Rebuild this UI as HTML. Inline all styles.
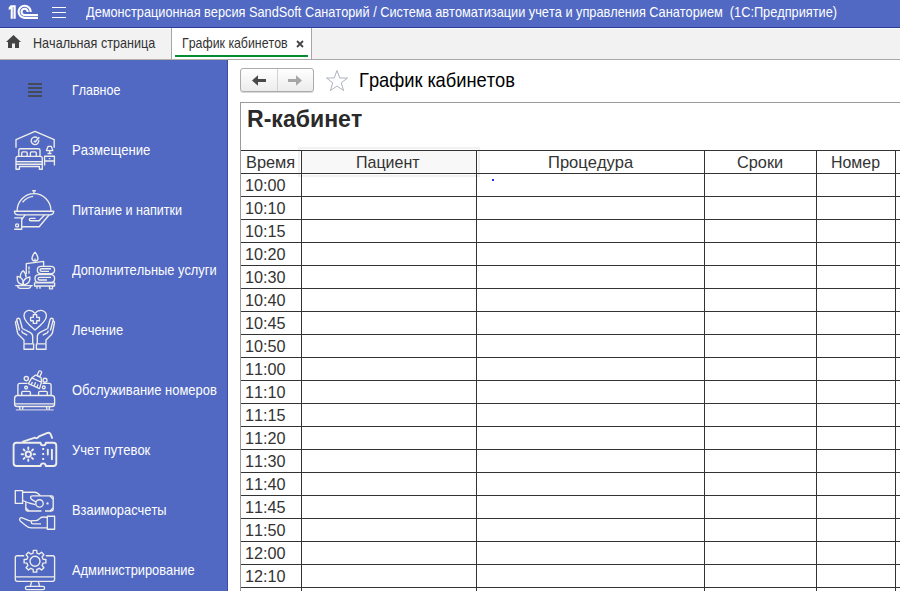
<!DOCTYPE html>
<html lang="ru">
<head>
<meta charset="utf-8">
<title>График кабинетов</title>
<style>
*{box-sizing:border-box;margin:0;padding:0}
html,body{width:900px;height:591px;overflow:hidden;background:#fff;font-family:"Liberation Sans",Arial,sans-serif;color:#222}
.abs{position:absolute}
.tx{font-kerning:none;height:20px;line-height:20px;white-space:pre;transform-origin:0 50%}
#top{left:0;top:0;width:900px;height:28px;background:#5169c3;border-bottom:1px solid #2b3c98}
#tabs{left:0;top:28px;width:900px;height:32px;background:linear-gradient(#fbfbfb 0,#fbfbfb 1px,#f2f2f2 1px);border-bottom:1px solid #a8a8a8}
#tabs .tan{left:0;top:31px;width:228px;height:1px;background:#b5b0a4}
#tab2{left:171px;top:0;width:141px;height:31px;background:#fff;border-left:1px solid #a6a6a6;border-right:1px solid #a6a6a6}
#tab2 .ul{left:3px;top:27px;width:133px;height:2px;background:#068a32}
#side{left:0;top:60px;width:228px;height:531px;background:#5169c3;border-right:1px solid #3a4ea2}
#main{left:228px;top:60px;width:672px;height:531px;background:#fff}
#nav{left:240px;top:68px;width:74px;height:24px;border:1px solid #ababab;border-radius:3px;background:linear-gradient(#fff,#ececec);box-shadow:0 1px 0 #d8d8d8}
#nav .dv{left:36px;top:0;width:1px;height:22px;background:#d2d2d2}
#sheet{left:240px;top:102px;width:660px;height:489px;border-left:1px solid #9b9b9b;border-top:1px solid #9b9b9b;background:#fff}
.hl{left:241px;width:659px;height:1px;background:#333}
.vl{top:150px;width:1px;height:441px;background:#333}
#selo{left:298px;top:147px;width:182px;height:30px;border:2px solid #f1f1f1}
#sel{left:301px;top:150px;width:175px;height:24px;background:#f8f8f8}
</style>
</head>
<body>
<div id="top" class="abs">
<svg class="abs" style="left:0;top:0" width="80" height="27" viewBox="0 0 80 27"><path d="M10.7 5.3 H15.7 V18.8 H10.7 V9 L8.7 10 V7.4 Z" fill="#fff"/><path d="M13.2 7.2 V18.8" stroke="#5169c3" stroke-width="0.7" fill="none"/><g fill="none" stroke="#fff" stroke-width="2.1"><path d="M30.7 11.9 A6.05 6.05 0 1 0 24.6 17.9 H38"/><path d="M27.7 11.9 A3.1 3.1 0 1 0 24.6 15 H38"/></g><path d="M52 7.5H66M52 12.5H66M52 17.5H66" stroke="#fff" stroke-width="1.15"/></svg>
</div>
<div id="tabs" class="abs">
<svg class="abs" style="left:6px;top:7px" width="15" height="13" viewBox="0 0 15 13"><path d="M7.5 0 L0 7 H2 V13 H6 V8.5 H9 V13 H13 V7 H15 Z" fill="#444"/></svg>
<div id="tab2" class="abs"><div class="abs ul"></div>
<svg class="abs" style="left:124px;top:12px" width="8" height="8" viewBox="0 0 8 8"><path d="M1 1 L7 7 M7 1 L1 7" stroke="#444" stroke-width="1.8"/></svg>
</div>
<div class="abs tan"></div>
</div>
<div id="side" class="abs"></div>
<svg class="abs" style="left:28px;top:83px" width="14" height="14" viewBox="0 0 14 14"><path d="M0 1H14M0 5H14M0 9H14M0 13H14" stroke="#454a58" stroke-width="2"/></svg>
<svg class="abs" style="left:0;top:0" width="228" height="591" viewBox="0 0 228 591"><g fill="none" stroke="#efeee9" stroke-width="1.35" stroke-linejoin="round" stroke-linecap="butt">
<g transform="translate(8,124)"><path d="M8 23.8 V15.6 L27 7.3 L46.2 15.6 V23.8"/>
<path d="M29.4 13.9 A3.8 3.8 0 1 0 30.7 16.2"/>
<path d="M25.9 16.9 L27.2 18 L31.3 13.3" stroke-width="1.5"/>
<path d="M10.8 32.2 V26.2 Q10.8 24.7 12.3 24.7 H30.5 Q32 24.7 32 26.2 V32.2"/>
<path d="M13.7 32.2 V29 Q13.7 27.9 14.8 27.9 H18.1 Q19.2 27.9 19.2 29 V32.2"/>
<path d="M22.4 32.2 V29 Q22.4 27.9 23.5 27.9 H27.2 Q28.3 27.9 28.3 29 V32.2"/>
<path d="M8 40.2 V34.4 Q8 32.4 10 32.4 H32.3 Q34.3 32.4 34.3 34.4 V40.2 Z"/>
<path d="M8 37.7 H34.3"/>
<path d="M8 40.2 V45.2 H11.4 V42.5 H31.4 V45.2 H34.3 V40.2"/>
<path d="M40 22.4 H43.4 L44.8 26.6 H38.5 Z"/>
<path d="M41.7 26.6 V29.5 M39.5 29.5 H43.6"/>
<path d="M36.6 32.2 H46.4 V37 H36.6 Z M36.6 37 V41.6 M46.4 37 V41.6 M40.8 34.6 H42.3"/></g>
<g transform="translate(8,184)"><path d="M24.2 6.7 H27.9 M26 6.7 V9.4"/>
<path d="M9.1 27 A16.95 17.4 0 0 1 43 27"/>
<path d="M14.6 18.3 Q18.5 13 25.1 12.3"/>
<path d="M6.4 27.2 H45.7 Q45.7 30.8 41.5 30.8 H10.6 Q6.4 30.8 6.4 27.2 Z"/>
<path d="M6.2 33.9 H13.7 V45.2 H6.2"/>
<circle cx="9.1" cy="41.4" r="1.5"/>
<path d="M13.7 35.5 L17.2 30.9"/>
<path d="M13.7 42.7 H31.2 L41 31"/>
<path d="M36.5 31 L31 36.7 H22.6 Q21.3 36.7 21.3 35.5 Q21.3 34.3 22.6 34.3 H27.6"/></g>
<g transform="translate(8,244)"><path d="M27 8.2 Q30 12 30 14.2 Q30 17 27 17 Q24 17 24 14.2 Q24 12 27 8.2 Z"/>
<path d="M27 14.5 V17"/>
<path d="M18.3 30 V19.7 L35.6 17.4 V22.2"/>
<path d="M21 22.4 V25.4 M21 26.6 V29.8"/>
<path d="M33 29.7 Q29.3 29.7 29.3 26 Q29.3 22.4 33 22.4 H43 Q46.6 22.4 46.6 26 Q46.6 29.7 43 29.7 Z"/>
<path d="M41 27.4 H33.6 Q32.1 27.4 32.1 26 Q32.1 24.7 33.6 24.7 H43"/>
<path d="M31 38.4 Q27 38.4 27 34.5 Q27 30.6 31 30.6 H43 Q46.6 30.6 46.6 34.5 Q46.6 38.4 43 38.4 Z"/>
<path d="M39 36 H31.6 Q30.100 36 30.100 34.700 Q30.100 33.300 31.6 33.300 H43"/>
<path d="M26.5 38.8 H46.6 V42 H26.5 Z M29 42 V44.8 M32 42 V44.8 M41.5 42 V44.8 H44.5 V42"/>
<path d="M15 26.6 Q18.5 30 18 33.5 M15 26.6 Q11.8 30 12.5 33"/>
<path d="M9.2 32.4 Q13.5 33 14.8 36.5 Q15.6 39 14.6 40.7 Q10.5 40 9.5 36.5 Q9 34.5 9.2 32.4 Z"/>
<path d="M21.8 33 Q17 34 15.6 37 Q14.8 39 15.4 40.7 Q20 40.4 21.4 37 Q22.2 35 21.8 33 Z"/>
<path d="M7.3 41.6 H24.7 M9.6 42 Q10 44.3 12.5 44.3 H20 Q22.5 44.3 22.8 42"/></g>
<g transform="translate(8,304)"><path d="M27 9.3 Q24.5 6.2 21 6.4 Q16 7 16 12 Q16 17 27 26 Q38.4 17 38.4 12 Q38.4 7 33 6.4 Q29.5 6.2 27 9.3 Z"/>
<path d="M25.3 10.6 H28.7 V13.3 H31.4 V16.7 H28.7 V19.4 H25.3 V16.7 H22.6 V13.3 H25.3 Z"/>
<path d="M16 39.6 V36 L10.5 30.5 Q9.6 29.6 9.4 28.2 L7.6 19 Q7.3 17.2 9 16.9 L8.8 15.6 Q8.8 14.2 10.4 14.2 Q11.6 14.2 12 15.6 L14.3 24.5"/>
<path d="M9 16.9 L11.6 26.5"/>
<path d="M14.3 24.5 L22 28.4 Q24.7 29.8 24.7 32.5 V39.6"/>
<path d="M14 26.6 Q13.4 28 14.8 28.8 L19.3 31.2"/>
<path d="M38 39.6 V36 L43.5 30.5 Q44.4 29.6 44.6 28.2 L46.4 19 Q46.7 17.2 45 16.9 L45.2 15.6 Q45.2 14.2 43.6 14.2 Q42.4 14.2 42 15.6 L39.7 24.5"/>
<path d="M45 16.9 L42.4 26.5"/>
<path d="M39.7 24.5 L32 28.4 Q29.3 29.8 29.3 32.5 V39.6"/>
<path d="M40 26.6 Q40.6 28 39.2 28.8 L34.7 31.2"/>
<path d="M16 39.8 H25.6 V45.2 H16 Z M28.4 39.8 H38 V45.2 H28.4 Z"/></g>
<g transform="translate(8,364)"><path d="M9.9 31.5 V21.4 Q9.9 19.4 11.9 19.4 H19.5 M34.5 19.4 H41.1 Q43.1 19.4 43.1 21.4 V31.5"/>
<path d="M13.7 31.3 V28.6 Q13.7 27.4 14.9 27.4 H21.2 Q22.4 27.4 22.4 28.6 V31.3"/>
<path d="M30.6 31.3 V28.6 Q30.6 27.4 31.8 27.4 H38.1 Q39.3 27.4 39.3 28.6 V31.3"/>
<path d="M6.6 40 V34.5 Q6.6 31.5 9.6 31.5 H43.6 Q46.6 31.5 46.6 34.5 V40 Q46.6 42.5 44 42.5 H9.2 Q6.6 42.5 6.6 40 Z"/>
<path d="M6.6 39.8 H46.6"/>
<path d="M11.4 42.5 L12 45.6 M15 42.5 L14.4 45.6 M38.4 42.5 L39 45.6 M41.6 42.5 L41 45.6"/>
<path d="M7.8 45.8 H45.7" stroke-opacity="0.75"/>
<circle cx="18.3" cy="14.6" r="2.1"/><circle cx="37" cy="16.2" r="2"/>
<circle cx="18.1" cy="23.6" r="1.4"/><circle cx="35.8" cy="23.4" r="1.4"/>
<g transform="translate(28.7,15.9) rotate(24) scale(0.95,0.9)">
<path d="M-1.6 -9.6 Q-1.6 -10.8 0 -10.8 Q1.6 -10.8 1.6 -9.6 V-4.4 H-1.6 Z"/>
<path d="M-3.2 -4.4 H3.2 L5.6 0.2 H-5.6 Z"/>
<path d="M-5.6 0.2 L-6.4 7.6 H6.4 L5.6 0.2"/>
<path d="M-3.2 4 V7.4 M0 3 V7.4 M3.2 4 V7.4"/>
</g></g>
<g transform="translate(8,424)"><g stroke-width="1.9">
<path d="M8.5 18.8 H32.6 A2.6 2.6 0 0 0 37.8 18.8 H45.4 Q48.3 18.8 48.3 21.8 V39 Q48.3 42 45.4 42 H37.8 A2.6 2.6 0 0 0 32.600 42 H8.5 Q5.600 42 5.600 39 V21.8 Q5.600 18.800 8.5 18.8 Z"/>
<path d="M14.2 17.9 L27 13.6 Q28.800 15.2 31 12.4 L39.6 8.900 Q41.600 8.3 42.5 10 L44.4 14.6"/>
<circle cx="20.300" cy="30.2" r="2.7"/>
<path d="M20.300 23.5 V25 M20.300 35.4 V36.9 M13.6 30.2 H15.100 M25.5 30.2 H27 M15.6 25.5 L16.700 26.600 M23.900 33.8 L25 34.900 M15.6 34.900 L16.700 33.8 M23.900 26.600 L25 25.5" stroke-linecap="round"/>
<path d="M35.2 24 V26 M35.2 29 V31 M35.2 34 V36"/>
<path d="M39.800 25.6 V30.6 M43.900 25.6 V35.2" stroke-linecap="round"/>
</g></g>
<g transform="translate(8,484)"><path d="M7.3 6.600 H14.6 V19.4 H7.3 Z"/>
<path d="M14.6 8.2 H26.5 Q29.5 8.2 32.5 11.9"/>
<path d="M14.6 16.5 Q21 19.500 27.400 20.600"/>
<path d="M32.5 11.9 H24.5 Q22.600 11.9 22.600 13.600 Q22.600 14.8 24 15.6 L28 18"/>
<path d="M32.5 11.9 H43.5 Q45.2 11.9 45.2 13.600 V25.3 Q45.2 27 43.5 27 H37 M33.5 27 H19.500 Q17.800 27 17.800 25.3 V18.2"/>
<circle cx="31.5" cy="19.400" r="3.700"/>
<path d="M42 12 L45 15 M45 24 L42 27 M17.900 24 L21 27"/>
<circle cx="39.5" cy="19.400" r="0.500"/>
<path d="M39.300 32.200 H46.600 V45.2 H39.300 Z"/>
<path d="M39.300 33.5 Q35.5 32.5 33 33.5 L30.5 35.600 Q29.500 36.600 28 36.600 H25 Q23.300 36.600 23.300 38.200 Q23.300 39.800 25 39.800 H33"/>
<path d="M23.600 37 Q21 37 18.500 35.600 L14.2 33.8 Q12.600 33.200 11.800 34.600 Q11.200 36 12.500 37.200 L18 41.800 Q20.500 43.900 23.500 43.900 H39.300"/></g>
<g transform="translate(8,537)"><path d="M16.200 18.700 H9.300 Q7.300 18.700 7.300 20.700 V42.300 Q7.300 44.300 9.300 44.300 H44.600 Q46.600 44.300 46.600 42.300 V20.700 Q46.600 18.700 44.600 18.700 H37.800"/>
<path d="M7.300 39.800 H46.600"/>
<path d="M23.800 44.300 L22.300 49.400 M30.200 44.300 L31.700 49.400"/>
<path d="M19 49.400 H35 Q36.600 49.400 36.600 51 Q36.600 52.600 35 52.600 H19 Q17.400 52.600 17.400 51 Q17.400 49.400 19 49.400 Z"/>
<path d="M25.1 16.1 L25.3 13.3 L28.7 13.3 L28.9 16.1 L31.3 17.1 L33.5 15.3 L35.9 17.7 L34.1 19.9 L35.1 22.3 L37.9 22.5 L37.9 25.9 L35.1 26.1 L34.1 28.5 L35.9 30.7 L33.5 33.1 L31.3 31.3 L28.9 32.3 L28.7 35.1 L25.3 35.1 L25.1 32.3 L22.7 31.3 L20.5 33.1 L18.1 30.7 L19.9 28.5 L18.9 26.1 L16.1 25.9 L16.1 22.5 L18.9 22.3 L19.9 19.9 L18.1 17.7 L20.5 15.3 L22.7 17.1Z" stroke-linejoin="round"/>
<circle cx="27" cy="24.200" r="5"/></g>
</g></svg>
<div id="main" class="abs"></div>
<div id="nav" class="abs"><div class="abs dv"></div>
<svg class="abs" style="left:11px;top:6px" width="15" height="11" viewBox="0 0 15 11"><path d="M0 5.5 L6 0.3 V3.9 H14 V7.1 H6 V10.7 Z" fill="#484848"/></svg>
<svg class="abs" style="left:47px;top:6px" width="15" height="11" viewBox="0 0 15 11"><path d="M14 5.5 L8 0.3 V3.9 H0 V7.1 H8 V10.7 Z" fill="#a6a6a6"/></svg>
</div>
<svg class="abs" style="left:324.7px;top:68.5px" width="24" height="24" viewBox="0 0 24 24"><path d="M12 1.5 L14.8 9 H22.5 L16.3 13.8 L18.6 21.6 L12 17 L5.4 21.6 L7.7 13.8 L1.5 9 H9.2 Z" fill="#fff" stroke="#a8afb8" stroke-width="0.95"/></svg>
<div id="sheet" class="abs"></div>
<div id="selo" class="abs"></div>
<div id="sel" class="abs"></div>
<div class="abs hl" style="top:150px"></div>
<div class="abs hl" style="top:173px"></div>
<div class="abs hl" style="top:196px"></div>
<div class="abs hl" style="top:219px"></div>
<div class="abs hl" style="top:242px"></div>
<div class="abs hl" style="top:265px"></div>
<div class="abs hl" style="top:288px"></div>
<div class="abs hl" style="top:311px"></div>
<div class="abs hl" style="top:334px"></div>
<div class="abs hl" style="top:357px"></div>
<div class="abs hl" style="top:380px"></div>
<div class="abs hl" style="top:403px"></div>
<div class="abs hl" style="top:426px"></div>
<div class="abs hl" style="top:449px"></div>
<div class="abs hl" style="top:472px"></div>
<div class="abs hl" style="top:495px"></div>
<div class="abs hl" style="top:518px"></div>
<div class="abs hl" style="top:541px"></div>
<div class="abs hl" style="top:564px"></div>
<div class="abs hl" style="top:587px"></div>
<div class="abs vl" style="left:301px"></div>
<div class="abs vl" style="left:476px"></div>
<div class="abs vl" style="left:704px"></div>
<div class="abs vl" style="left:816px"></div>
<div class="abs vl" style="left:895px"></div>
<div class="abs" style="left:492px;top:179px;width:2px;height:2px;background:#2a2af0"></div>
<div class="abs tx" id="t0" style="left:86px;top:2.08px;font-size:14.2px;transform:scaleX(0.8982);color:#fff">Демонстрационная версия SandSoft Санаторий / Система автоматизации учета и управления Санаторием  (1С:Предприятие)</div>
<div class="abs tx" id="t1" style="left:32.5px;top:33.08px;font-size:14.2px;transform:scaleX(0.8881);color:#333">Начальная страница</div>
<div class="abs tx" id="t2" style="left:182px;top:33.08px;font-size:14.2px;transform:scaleX(0.8734);color:#333">График кабинетов</div>
<div class="abs tx" id="t3" style="left:71.9px;top:80.08px;font-size:14.2px;transform:scaleX(0.8798);color:#fff">Главное</div>
<div class="abs tx" id="t4" style="left:71.9px;top:140.08px;font-size:14.2px;transform:scaleX(0.9254);color:#fff">Размещение</div>
<div class="abs tx" id="t5" style="left:71.9px;top:200.08px;font-size:14.2px;transform:scaleX(0.8884);color:#fff">Питание и напитки</div>
<div class="abs tx" id="t6" style="left:71.9px;top:260.08px;font-size:14.2px;transform:scaleX(0.9054);color:#fff">Дополнительные услуги</div>
<div class="abs tx" id="t7" style="left:71.9px;top:320.08px;font-size:14.2px;transform:scaleX(0.9120);color:#fff">Лечение</div>
<div class="abs tx" id="t8" style="left:71.9px;top:380.08px;font-size:14.2px;transform:scaleX(0.9120);color:#fff">Обслуживание номеров</div>
<div class="abs tx" id="t9" style="left:71.9px;top:440.08px;font-size:14.2px;transform:scaleX(0.9153);color:#fff">Учет путевок</div>
<div class="abs tx" id="t10" style="left:71.9px;top:500.08px;font-size:14.2px;transform:scaleX(0.9072);color:#fff">Взаиморасчеты</div>
<div class="abs tx" id="t11" style="left:71.9px;top:560.08px;font-size:14.2px;transform:scaleX(0.9051);color:#fff">Администрирование</div>
<div class="abs tx" id="t12" style="left:358.6px;top:70.00px;font-size:20.2px;transform:scaleX(0.9060);color:#000">График кабинетов</div>
<div class="abs tx" id="t13" style="left:246.6px;top:108.96px;font-size:23.2px;transform:scaleX(0.9947);color:#2a2a2a;font-weight:bold">R-кабинет</div>
<div class="abs tx" id="t14" style="left:245.6px;top:153.11px;font-size:17px;transform:scaleX(0.9618);color:#333">Время</div>
<div class="abs tx" id="t15" style="left:355.6px;top:153.11px;font-size:17px;transform:scaleX(0.9416);color:#333">Пациент</div>
<div class="abs tx" id="t16" style="left:547.8px;top:153.11px;font-size:17px;transform:scaleX(0.9720);color:#333">Процедура</div>
<div class="abs tx" id="t17" style="left:737px;top:153.11px;font-size:17px;transform:scaleX(0.9600);color:#333">Сроки</div>
<div class="abs tx" id="t18" style="left:830.6px;top:153.11px;font-size:17px;transform:scaleX(0.9364);color:#333">Номер</div>
<div class="abs tx" id="t19" style="left:245.4px;top:176.11px;font-size:17px;transform:scaleX(0.9542);color:#333">10:00</div>
<div class="abs tx" id="t20" style="left:245.4px;top:199.11px;font-size:17px;transform:scaleX(0.9542);color:#333">10:10</div>
<div class="abs tx" id="t21" style="left:245.4px;top:222.11px;font-size:17px;transform:scaleX(0.9542);color:#333">10:15</div>
<div class="abs tx" id="t22" style="left:245.4px;top:245.11px;font-size:17px;transform:scaleX(0.9542);color:#333">10:20</div>
<div class="abs tx" id="t23" style="left:245.4px;top:268.11px;font-size:17px;transform:scaleX(0.9542);color:#333">10:30</div>
<div class="abs tx" id="t24" style="left:245.4px;top:291.11px;font-size:17px;transform:scaleX(0.9542);color:#333">10:40</div>
<div class="abs tx" id="t25" style="left:245.4px;top:314.11px;font-size:17px;transform:scaleX(0.9542);color:#333">10:45</div>
<div class="abs tx" id="t26" style="left:245.4px;top:337.11px;font-size:17px;transform:scaleX(0.9542);color:#333">10:50</div>
<div class="abs tx" id="t27" style="left:245.4px;top:360.11px;font-size:17px;transform:scaleX(0.9542);color:#333">11:00</div>
<div class="abs tx" id="t28" style="left:245.4px;top:383.11px;font-size:17px;transform:scaleX(0.9542);color:#333">11:10</div>
<div class="abs tx" id="t29" style="left:245.4px;top:406.11px;font-size:17px;transform:scaleX(0.9542);color:#333">11:15</div>
<div class="abs tx" id="t30" style="left:245.4px;top:429.11px;font-size:17px;transform:scaleX(0.9542);color:#333">11:20</div>
<div class="abs tx" id="t31" style="left:245.4px;top:452.11px;font-size:17px;transform:scaleX(0.9542);color:#333">11:30</div>
<div class="abs tx" id="t32" style="left:245.4px;top:475.11px;font-size:17px;transform:scaleX(0.9542);color:#333">11:40</div>
<div class="abs tx" id="t33" style="left:245.4px;top:498.11px;font-size:17px;transform:scaleX(0.9542);color:#333">11:45</div>
<div class="abs tx" id="t34" style="left:245.4px;top:521.11px;font-size:17px;transform:scaleX(0.9542);color:#333">11:50</div>
<div class="abs tx" id="t35" style="left:245.4px;top:544.11px;font-size:17px;transform:scaleX(0.9542);color:#333">12:00</div>
<div class="abs tx" id="t36" style="left:245.4px;top:567.11px;font-size:17px;transform:scaleX(0.9542);color:#333">12:10</div>
</body>
</html>
